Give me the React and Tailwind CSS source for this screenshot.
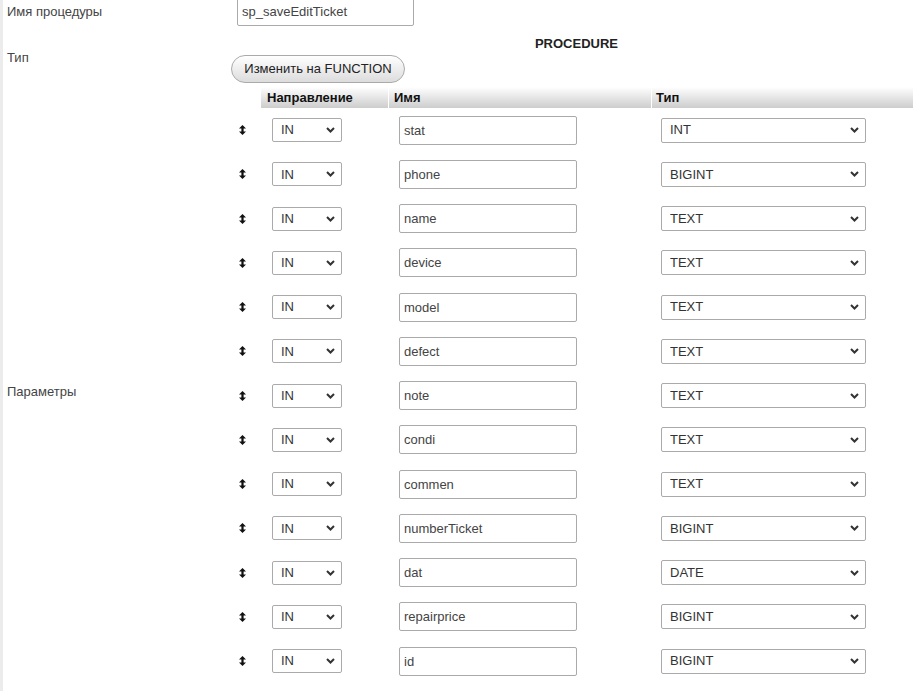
import React from "react";

const params = [
  { name: "stat", type: "INT" },
  { name: "phone", type: "BIGINT" },
  { name: "name", type: "TEXT" },
  { name: "device", type: "TEXT" },
  { name: "model", type: "TEXT" },
  { name: "defect", type: "TEXT" },
  { name: "note", type: "TEXT" },
  { name: "condi", type: "TEXT" },
  { name: "commen", type: "TEXT" },
  { name: "numberTicket", type: "BIGINT" },
  { name: "dat", type: "DATE" },
  { name: "repairprice", type: "BIGINT" },
  { name: "id", type: "BIGINT" },
];

const types = ["INT", "BIGINT", "TEXT", "DATE", "VARCHAR"];

const Chevron = () => (
  <svg
    className="pointer-events-none absolute top-1/2 right-[7px] -translate-y-1/2"
    width="9"
    height="6"
    viewBox="0 0 9 6"
  >
    <path d="M1 1 L4.5 4.5 L8 1" fill="none" stroke="#333" strokeWidth="2" />
  </svg>
);

const Handle = () => (
  <svg width="7" height="10" viewBox="0 0 7 10">
    <path d="M3.5 0 L7 3.5 L0 3.5 Z" fill="#111" />
    <rect x="2.4" y="3" width="2.2" height="4" fill="#111" />
    <path d="M0 6.5 L7 6.5 L3.5 10 Z" fill="#111" />
  </svg>
);

const Select = ({ value, options, className }) => (
  <div className={`relative ${className}`}>
    <select
      defaultValue={value}
      className="h-full w-full appearance-none rounded-[2px] border border-[#aaa] bg-white pl-[8px] text-[13px] text-[#333] outline-none"
    >
      {options.map((o) => (
        <option key={o}>{o}</option>
      ))}
    </select>
    <Chevron />
  </div>
);

export default function App() {
  return (
    <div
      className="h-[691px] overflow-hidden border-l-[3px] border-[#ececec] bg-white text-[13px] text-[#444]"
      style={{ fontFamily: '"Liberation Sans", Arial, sans-serif' }}
    >
      {/* Имя процедуры */}
      <div className="-mt-[3px] flex h-[29px] items-center">
        <div className="w-[228px] pl-[4px]">Имя процедуры</div>
        <div className="pl-[6px]">
          <input
            defaultValue="sp_saveEditTicket"
            className="h-[29px] w-[177px] rounded-[2px] border border-[#aaa] px-[4px] text-[13px] text-[#444] outline-none"
          />
        </div>
      </div>

      {/* Тип */}
      <div className="flex h-[61px]">
        <div className="w-[228px] pt-[24px] pl-[4px] leading-[15px]">Тип</div>
        <div className="flex-1 pt-[10px]">
          <div className="h-[15px] pl-[9px] text-center leading-[15px] font-bold text-[#222]">
            PROCEDURE
          </div>
          <button className="mt-[4px] h-[28px] w-[174px] rounded-full border border-[#aaa] bg-linear-to-b from-white to-[#dcdcdc] text-[13px] text-[#222]">
            Изменить на FUNCTION
          </button>
        </div>
      </div>

      {/* Параметры */}
      <div className="flex">
        <div className="flex w-[228px] items-center pt-[14px] pl-[4px]">Параметры</div>
        <div className="flex-1">
          <div className="flex h-[21px] items-center">
            <div className="w-[30px]" />
            <div className="flex h-full flex-1 bg-linear-to-b from-white to-[#cdcdcd] font-bold text-[#111] leading-[21px]">
              <div className="w-[127px] pl-[6px]">Направление</div>
              <div className="w-[263px] border-l border-white pl-[5px]">Имя</div>
              <div className="flex-1 border-l border-white pl-[4px]">Тип</div>
            </div>
          </div>
          {params.map((p) => (
            <div key={p.name} className="flex h-[44.25px] items-center">
              <div className="flex w-[30px] pl-[8px]">
                <Handle />
              </div>
              <div className="w-[127px] pl-[11px]">
                <Select value="IN" options={["IN", "OUT", "INOUT"]} className="h-[24px] w-[70px]" />
              </div>
              <div className="w-[263px] pl-[11px]">
                <input
                  defaultValue={p.name}
                  className="h-[29px] w-[178px] rounded-[2px] border border-[#aaa] px-[4px] text-[13px] text-[#444] outline-none"
                />
              </div>
              <div className="flex-1 pl-[10px]">
                <Select value={p.type} options={types} className="h-[25px] w-[205px]" />
              </div>
            </div>
          ))}
        </div>
      </div>
    </div>
  );
}
